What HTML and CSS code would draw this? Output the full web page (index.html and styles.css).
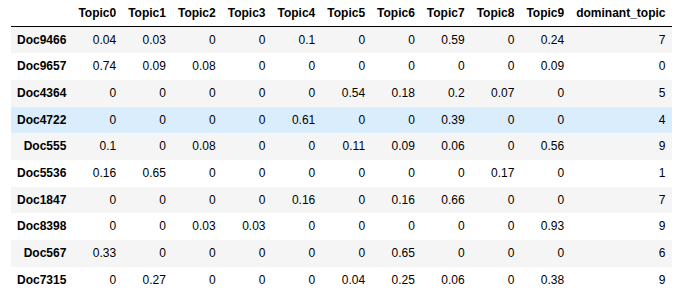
FILE: index.html
```html
<!DOCTYPE html>
<html>
<head>
<meta charset="utf-8">
<link rel="stylesheet" href="styles.css">
</head>
<body>
<table class="dataframe">
  <thead>
    <tr><th></th><th>Topic0</th><th>Topic1</th><th>Topic2</th><th>Topic3</th><th>Topic4</th><th>Topic5</th><th>Topic6</th><th>Topic7</th><th>Topic8</th><th>Topic9</th><th>dominant_topic</th></tr>
  </thead>
  <tbody>
    <tr><th>Doc9466</th><td>0.04</td><td>0.03</td><td>0</td><td>0</td><td>0.1</td><td>0</td><td>0</td><td>0.59</td><td>0</td><td>0.24</td><td>7</td></tr>
    <tr><th>Doc9657</th><td>0.74</td><td>0.09</td><td>0.08</td><td>0</td><td>0</td><td>0</td><td>0</td><td>0</td><td>0</td><td>0.09</td><td>0</td></tr>
    <tr><th>Doc4364</th><td>0</td><td>0</td><td>0</td><td>0</td><td>0</td><td>0.54</td><td>0.18</td><td>0.2</td><td>0.07</td><td>0</td><td>5</td></tr>
    <tr class="hover"><th>Doc4722</th><td>0</td><td>0</td><td>0</td><td>0</td><td>0.61</td><td>0</td><td>0</td><td>0.39</td><td>0</td><td>0</td><td>4</td></tr>
    <tr><th>Doc555</th><td>0.1</td><td>0</td><td>0.08</td><td>0</td><td>0</td><td>0.11</td><td>0.09</td><td>0.06</td><td>0</td><td>0.56</td><td>9</td></tr>
    <tr><th>Doc5536</th><td>0.16</td><td>0.65</td><td>0</td><td>0</td><td>0</td><td>0</td><td>0</td><td>0</td><td>0.17</td><td>0</td><td>1</td></tr>
    <tr><th>Doc1847</th><td>0</td><td>0</td><td>0</td><td>0</td><td>0.16</td><td>0</td><td>0.16</td><td>0.66</td><td>0</td><td>0</td><td>7</td></tr>
    <tr><th>Doc8398</th><td>0</td><td>0</td><td>0.03</td><td>0.03</td><td>0</td><td>0</td><td>0</td><td>0</td><td>0</td><td>0.93</td><td>9</td></tr>
    <tr><th>Doc567</th><td>0.33</td><td>0</td><td>0</td><td>0</td><td>0</td><td>0</td><td>0.65</td><td>0</td><td>0</td><td>0</td><td>6</td></tr>
    <tr><th>Doc7315</th><td>0</td><td>0.27</td><td>0</td><td>0</td><td>0</td><td>0.04</td><td>0.25</td><td>0.06</td><td>0</td><td>0.38</td><td>9</td></tr>
  </tbody>
</table>
</body>
</html>
```

FILE: styles.css
```css
html, body {
  margin: 0;
  padding: 0;
  background: #fff;
}
body {
  padding-left: 11px;
  font-family: "Liberation Sans", Arial, sans-serif;
  font-size: 12px;
  color: #000;
}
.dataframe {
  border-collapse: collapse;
  border-spacing: 0;
  border: none;
}
.dataframe th,
.dataframe td {
  text-align: right;
  vertical-align: middle;
  padding: 6px;
  line-height: 14.67px;
  white-space: nowrap;
}
.dataframe th {
  font-weight: bold;
}
.dataframe td {
  font-weight: normal;
}
.dataframe thead th {
  border-bottom: 1px solid #000;
  vertical-align: bottom;
  padding-top: 6px;
  padding-bottom: 5px;
}
.dataframe tbody tr:nth-child(odd) {
  background: #f5f5f5;
}
.dataframe tbody tr.hover {
  background: #d9edfd;
}
```
